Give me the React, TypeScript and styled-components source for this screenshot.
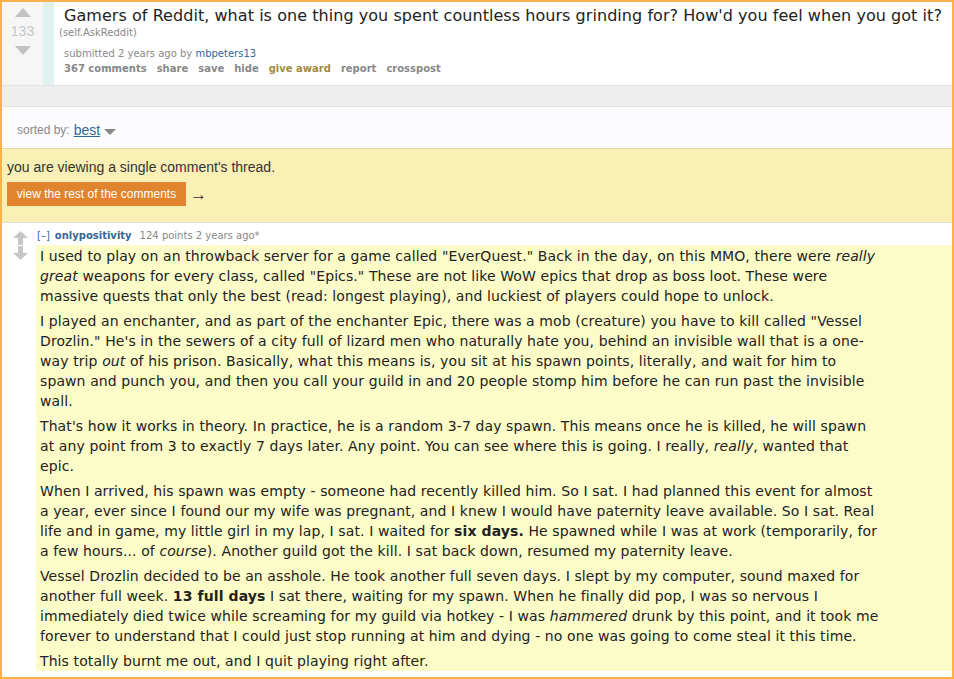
import styled, { createGlobalStyle } from "styled-components";

const GlobalStyle = createGlobalStyle`
    html, body {
        margin: 0;
        padding: 0;
        background: #ffffff;
    }
    * {
        box-sizing: border-box;
    }
`;

const Frame = styled.div`
    height: 100vh;
    border: 2px solid #fbb24c;
    overflow: hidden;
    display: flex;
    flex-direction: column;
    font-family: "DejaVu Sans", Verdana, sans-serif;
    background: #ffffff;
`;

const Thing = styled.div`
    display: flex;
    height: 83px;
    flex-shrink: 0;
`;

const VoteCol = styled.div`
    width: 41px;
    background: #f6f6f6;
    display: flex;
    flex-direction: column;
    align-items: center;
    padding-top: 6px;
`;

const Score = styled.div`
    font-size: 14px;
    color: #c6c6c6;
    font-family: "Liberation Sans", Arial, sans-serif;
    margin: 6px 0 7px;
    line-height: 16px;
`;

const Strip = styled.div`
    width: 11px;
    background: #e0f2f0;
`;

const Entry = styled.div`
    padding: 4px 0 0 5px;
    flex: 1;
`;

const Title = styled.a`
    display: block;
    font-size: 16px;
    color: #222222;
    line-height: 20px;
    padding-left: 5px;
    letter-spacing: 0.05px;
`;

const Domain = styled.span`
    display: block;
    font-size: 10px;
    color: #888888;
    line-height: 14px;
`;

const Tagline = styled.div`
    font-size: 10px;
    color: #888888;
    padding-left: 5px;
    margin-top: 7px;
    line-height: 14px;
`;

const Author = styled.span<{ $bold?: boolean }>`
    color: #369;
    font-weight: ${(p) => (p.$bold ? "bold" : "normal")};
`;

const FlatList = styled.ul`
    display: flex;
    list-style: none;
    margin: 1px 0 0;
    padding: 0;
`;

const FlatItem = styled.li<{ $gold?: boolean }>`
    font-size: 10px;
    font-weight: bold;
    color: ${(p) => (p.$gold ? "#a08a45" : "#888888")};
    padding: 0 5px;
    line-height: 14px;
`;

const GreyBand = styled.div`
    height: 22px;
    background: #eeeeee;
    border-top: 1px solid #e2e2e2;
    border-bottom: 1px solid #e2e2e2;
    flex-shrink: 0;
`;

const SortArea = styled.div`
    height: 41px;
    background: #fcfcfe;
    display: flex;
    align-items: center;
    padding: 4px 0 0 15px;
    font-family: "Liberation Sans", Arial, sans-serif;
    flex-shrink: 0;
`;

const SortLabel = styled.span`
    font-size: 12px;
    color: #888888;
    margin-right: 4px;
`;

const SortValue = styled.span`
    font-size: 14px;
    color: #336699;
    text-decoration: underline;
`;

const Caret = styled.span`
    display: inline-block;
    width: 0;
    height: 0;
    border-left: 6px solid transparent;
    border-right: 6px solid transparent;
    border-top: 6px solid #888888;
    margin-left: 4px;
    margin-top: 4px;
`;

const InfoBar = styled.div`
    height: 75px;
    background: #faefb5;
    border-top: 1px solid #e8d898;
    border-bottom: 1px solid #dedede;
    padding: 10px 0 0 5px;
    font-family: "Liberation Sans", Arial, sans-serif;
    flex-shrink: 0;
`;

const InfoText = styled.div`
    font-size: 14px;
    color: #333333;
    line-height: 17px;
`;

const InfoRow = styled.div`
    display: flex;
    align-items: center;
    margin-top: 6px;
`;

const RestButton = styled.button`
    background: #e0842e;
    border: none;
    color: #ffffff;
    font-family: "Liberation Sans", Arial, sans-serif;
    font-size: 12px;
    height: 24px;
    width: 179px;
    padding: 0;
    cursor: pointer;
`;

const Arrow = styled.span`
    font-size: 17px;
    line-height: 17px;
    color: #333333;
    margin-left: 4px;
    font-family: "Liberation Sans", sans-serif;
`;

const Comment = styled.div`
    display: flex;
    flex: 1;
    min-height: 0;
`;

const CommentVote = styled.div`
    width: 34px;
    display: flex;
    flex-direction: column;
    align-items: center;
    padding: 8px 0 0 2px;
    gap: 1px;
`;

const CommentMain = styled.div`
    flex: 1;
    display: flex;
    flex-direction: column;
    align-items: flex-start;
    min-width: 0;
`;

const CommentTagline = styled.div`
    font-size: 10px;
    color: #888888;
    line-height: 14px;
    padding: 6px 0 0 1px;
    height: 22px;
`;

const Expand = styled.span`
    color: #369;
    margin-right: 5px;
`;

const Points = styled.span`
    margin-left: 8px;
`;

const Body = styled.div`
    background: #fcfcc9;
    align-self: stretch;
    padding: 1px 4px 0;
`;

const Md = styled.div`
    font-size: 14px;
    line-height: 20px;
    color: #222222;
    letter-spacing: 0.1px;
    white-space: nowrap;

    p {
        margin: 0 0 5px;
    }
    p:last-child {
        margin-bottom: 0;
    }
`;

function VoteArrow({ down }: { down?: boolean }) {
    return (
        <svg width="16" height="9" viewBox="0 0 16 9" style={{ transform: down ? "rotate(180deg)" : undefined }}>
            <polygon points="8,0 16,9 0,9" fill="#c2c2c2" />
        </svg>
    );
}

function StemArrow({ down }: { down?: boolean }) {
    return (
        <svg width="15" height="14" viewBox="0 0 15 14" style={{ transform: down ? "rotate(180deg)" : undefined }}>
            <polygon points="7.5,0 15,7 10,7 10,14 5,14 5,7 0,7" fill="#c6c6c6" />
        </svg>
    );
}

const links = ["367 comments", "share", "save", "hide", "give award", "report", "crosspost"];

export default function App() {
    return (
        <Frame>
            <GlobalStyle />
            <Thing>
                <VoteCol>
                    <VoteArrow />
                    <Score>133</Score>
                    <VoteArrow down />
                </VoteCol>
                <Strip />
                <Entry>
                    <Title>
                        Gamers of Reddit, what is one thing you spent countless hours grinding for? How'd you feel when you got it?
                    </Title>
                    <Domain>(self.AskReddit)</Domain>
                    <Tagline>
                        submitted 2 years ago by <Author>mbpeters13</Author>
                    </Tagline>
                    <FlatList>
                        {links.map((l) => (
                            <FlatItem key={l} $gold={l === "give award"}>
                                {l}
                            </FlatItem>
                        ))}
                    </FlatList>
                </Entry>
            </Thing>
            <GreyBand />
            <SortArea>
                <SortLabel>sorted by:</SortLabel>
                <SortValue>best</SortValue>
                <Caret />
            </SortArea>
            <InfoBar>
                <InfoText>you are viewing a single comment's thread.</InfoText>
                <InfoRow>
                    <RestButton>view the rest of the comments</RestButton>
                    <Arrow>→</Arrow>
                </InfoRow>
            </InfoBar>
            <Comment>
                <CommentVote>
                    <StemArrow />
                    <StemArrow down />
                </CommentVote>
                <CommentMain>
                    <CommentTagline>
                        <Expand>[–]</Expand>
                        <Author $bold>onlypositivity</Author>
                        <Points>124 points 2 years ago*</Points>
                    </CommentTagline>
                    <Body>
                        <Md>
                            <p>
                                I used to play on an throwback server for a game called "EverQuest." Back in the day, on this MMO, there were <em>really</em>
                                <br />
                                <em>great</em> weapons for every class, called "Epics." These are not like WoW epics that drop as boss loot. These were
                                <br />
                                massive quests that only the best (read: longest playing), and luckiest of players could hope to unlock.
                            </p>
                            <p>
                                I played an enchanter, and as part of the enchanter Epic, there was a mob (creature) you have to kill called "Vessel
                                <br />
                                Drozlin." He's in the sewers of a city full of lizard men who naturally hate you, behind an invisible wall that is a one-
                                <br />
                                way trip <em>out</em> of his prison. Basically, what this means is, you sit at his spawn points, literally, and wait for him to
                                <br />
                                spawn and punch you, and then you call your guild in and 20 people stomp him before he can run past the invisible
                                <br />
                                wall.
                            </p>
                            <p>
                                That's how it works in theory. In practice, he is a random 3-7 day spawn. This means once he is killed, he will spawn
                                <br />
                                at any point from 3 to exactly 7 days later. Any point. You can see where this is going. I really, <em>really</em>, wanted that
                                <br />
                                epic.
                            </p>
                            <p>
                                When I arrived, his spawn was empty - someone had recently killed him. So I sat. I had planned this event for almost
                                <br />
                                a year, ever since I found our my wife was pregnant, and I knew I would have paternity leave available. So I sat. Real
                                <br />
                                life and in game, my little girl in my lap, I sat. I waited for <strong>six days.</strong> He spawned while I was at work (temporarily, for
                                <br />
                                a few hours... of <em>course</em>). Another guild got the kill. I sat back down, resumed my paternity leave.
                            </p>
                            <p>
                                Vessel Drozlin decided to be an asshole. He took another full seven days. I slept by my computer, sound maxed for
                                <br />
                                another full week. <strong>13 full days</strong> I sat there, waiting for my spawn. When he finally did pop, I was so nervous I
                                <br />
                                immediately died twice while screaming for my guild via hotkey - I was <em>hammered</em> drunk by this point, and it took me
                                <br />
                                forever to understand that I could just stop running at him and dying - no one was going to come steal it this time.
                            </p>
                            <p>This totally burnt me out, and I quit playing right after.</p>
                        </Md>
                    </Body>
                </CommentMain>
            </Comment>
        </Frame>
    );
}
